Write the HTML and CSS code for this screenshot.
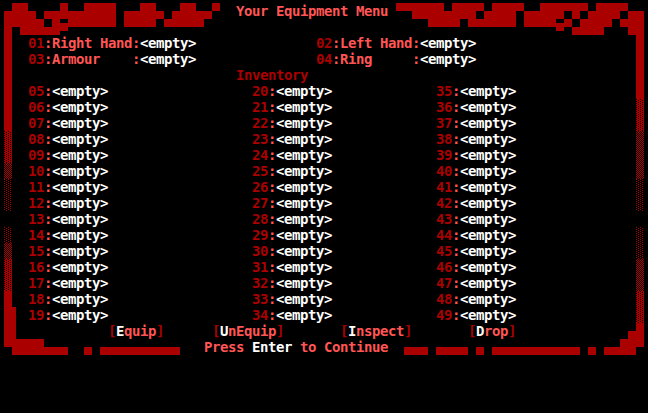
FILE: index.html
```html
<!DOCTYPE html>
<html>
<head>
<meta charset="utf-8">
<link rel="stylesheet" href="styles.css">
</head>
<body>
<div class="screen">
  <svg class="frame" width="648" height="413" viewBox="0 0 648 413" shape-rendering="crispEdges">
    <defs>
      <pattern id="light" width="4" height="2" patternUnits="userSpaceOnUse">
        <rect x="2" y="0" width="1" height="1" fill="#aa0000"/>
        <rect x="0" y="1" width="1" height="1" fill="#aa0000"/>
      </pattern>
      <pattern id="medium" width="2" height="2" patternUnits="userSpaceOnUse">
        <rect x="0" y="0" width="1" height="1" fill="#aa0000"/>
        <rect x="1" y="1" width="1" height="1" fill="#aa0000"/>
      </pattern>
      <pattern id="dark" width="4" height="2" patternUnits="userSpaceOnUse">
        <rect x="0" y="0" width="4" height="2" fill="#aa0000"/>
        <rect x="2" y="0" width="1" height="1" fill="#000"/>
        <rect x="0" y="1" width="1" height="1" fill="#000"/>
      </pattern>
    </defs>
    <g fill="#aa0000">
      <!-- top, half-row 0 -->
      <rect x="12" y="3" width="16" height="8"/>
      <rect x="60" y="3" width="8" height="8"/>
      <rect x="84" y="3" width="32" height="8"/>
      <rect x="140" y="3" width="16" height="8"/>
      <rect x="180" y="3" width="16" height="8"/>
      <rect x="212" y="3" width="8" height="8"/>
      <rect x="396" y="3" width="48" height="8"/>
      <rect x="452" y="3" width="32" height="8"/>
      <rect x="492" y="3" width="32" height="8"/>
      <rect x="540" y="3" width="48" height="8"/>
      <rect x="596" y="3" width="32" height="8"/>
      <!-- half-row 1 -->
      <rect x="4" y="11" width="32" height="8"/>
      <rect x="44" y="11" width="72" height="8"/>
      <rect x="124" y="11" width="40" height="8"/>
      <rect x="172" y="11" width="40" height="8"/>
      <rect x="412" y="11" width="64" height="8"/>
      <rect x="484" y="11" width="32" height="8"/>
      <rect x="524" y="11" width="40" height="8"/>
      <rect x="572" y="11" width="8" height="8"/>
      <rect x="588" y="11" width="32" height="8"/>
      <rect x="628" y="11" width="16" height="8"/>
      <!-- half-row 2 -->
      <rect x="4" y="19" width="40" height="8"/>
      <rect x="52" y="19" width="8" height="8"/>
      <rect x="68" y="19" width="48" height="8"/>
      <rect x="124" y="19" width="32" height="8"/>
      <rect x="164" y="19" width="40" height="8"/>
      <rect x="428" y="19" width="32" height="8"/>
      <rect x="468" y="19" width="48" height="8"/>
      <rect x="524" y="19" width="32" height="8"/>
      <rect x="564" y="19" width="8" height="8"/>
      <rect x="580" y="19" width="32" height="8"/>
      <rect x="620" y="19" width="24" height="8"/>
      <rect x="60" y="23" width="8" height="8"/>
      <rect x="556" y="23" width="8" height="8"/>
      <!-- half-row 3 -->
      <rect x="20" y="27" width="40" height="8"/>
      <rect x="572" y="27" width="32" height="8"/>
      <rect x="628" y="27" width="16" height="8"/>
      <!-- left bar -->
      <rect x="4" y="11" width="8" height="120"/>
      <rect x="4" y="131" width="8" height="32" fill="url(#dark)"/>
      <rect x="4" y="163" width="8" height="16" fill="url(#medium)"/>
      <rect x="4" y="179" width="8" height="32" fill="url(#light)"/>
      <rect x="4" y="227" width="8" height="16" fill="url(#light)"/>
      <rect x="4" y="243" width="8" height="16" fill="url(#medium)"/>
      <rect x="4" y="259" width="8" height="32" fill="url(#dark)"/>
      <rect x="4" y="291" width="8" height="56"/>
      <rect x="12" y="307" width="4" height="32"/>
      <rect x="4" y="339" width="40" height="8"/>
      <!-- right bar -->
      <rect x="636" y="11" width="8" height="88"/>
      <rect x="636" y="99" width="8" height="32" fill="url(#dark)"/>
      <rect x="636" y="131" width="8" height="48" fill="url(#medium)"/>
      <rect x="636" y="179" width="8" height="32" fill="url(#light)"/>
      <rect x="636" y="227" width="8" height="32" fill="url(#light)"/>
      <rect x="636" y="259" width="8" height="32" fill="url(#medium)"/>
      <rect x="636" y="291" width="8" height="32" fill="url(#dark)"/>
      <rect x="636" y="323" width="8" height="24"/>
      <rect x="628" y="331" width="8" height="16"/>
      <rect x="620" y="339" width="8" height="8"/>
      <!-- bottom -->
      <rect x="12" y="347" width="56" height="8"/>
      <rect x="84" y="347" width="8" height="8"/>
      <rect x="100" y="347" width="80" height="8"/>
      <rect x="404" y="347" width="24" height="8"/>
      <rect x="436" y="347" width="32" height="8"/>
      <rect x="476" y="347" width="8" height="8"/>
      <rect x="492" y="347" width="88" height="8"/>
      <rect x="588" y="347" width="8" height="8"/>
      <rect x="604" y="347" width="32" height="8"/>
    </g>
  </svg>

  <div class="row title">Your Equipment Menu</div>
  <div class="row"></div>

  <div class="equip">
    <div class="slot"><span class="num">01</span>:<span class="lbl">Right Hand</span>:<span class="val">&lt;empty&gt;</span></div>
    <div class="slot"><span class="num">02</span>:<span class="lbl">Left Hand</span>:<span class="val">&lt;empty&gt;</span></div>
    <div class="slot"><span class="num">03</span>:<span class="lbl">Armour    </span>:<span class="val">&lt;empty&gt;</span></div>
    <div class="slot"><span class="num">04</span>:<span class="lbl">Ring     </span>:<span class="val">&lt;empty&gt;</span></div>
  </div>

  <div class="row heading">Inventory</div>

  <div class="inventory">
    <div class="slot"><span class="num">05</span>:<span class="val">&lt;empty&gt;</span></div>
    <div class="slot"><span class="num">06</span>:<span class="val">&lt;empty&gt;</span></div>
    <div class="slot"><span class="num">07</span>:<span class="val">&lt;empty&gt;</span></div>
    <div class="slot"><span class="num">08</span>:<span class="val">&lt;empty&gt;</span></div>
    <div class="slot"><span class="num">09</span>:<span class="val">&lt;empty&gt;</span></div>
    <div class="slot"><span class="num">10</span>:<span class="val">&lt;empty&gt;</span></div>
    <div class="slot"><span class="num">11</span>:<span class="val">&lt;empty&gt;</span></div>
    <div class="slot"><span class="num">12</span>:<span class="val">&lt;empty&gt;</span></div>
    <div class="slot"><span class="num">13</span>:<span class="val">&lt;empty&gt;</span></div>
    <div class="slot"><span class="num">14</span>:<span class="val">&lt;empty&gt;</span></div>
    <div class="slot"><span class="num">15</span>:<span class="val">&lt;empty&gt;</span></div>
    <div class="slot"><span class="num">16</span>:<span class="val">&lt;empty&gt;</span></div>
    <div class="slot"><span class="num">17</span>:<span class="val">&lt;empty&gt;</span></div>
    <div class="slot"><span class="num">18</span>:<span class="val">&lt;empty&gt;</span></div>
    <div class="slot"><span class="num">19</span>:<span class="val">&lt;empty&gt;</span></div>
    <div class="slot"><span class="num">20</span>:<span class="val">&lt;empty&gt;</span></div>
    <div class="slot"><span class="num">21</span>:<span class="val">&lt;empty&gt;</span></div>
    <div class="slot"><span class="num">22</span>:<span class="val">&lt;empty&gt;</span></div>
    <div class="slot"><span class="num">23</span>:<span class="val">&lt;empty&gt;</span></div>
    <div class="slot"><span class="num">24</span>:<span class="val">&lt;empty&gt;</span></div>
    <div class="slot"><span class="num">25</span>:<span class="val">&lt;empty&gt;</span></div>
    <div class="slot"><span class="num">26</span>:<span class="val">&lt;empty&gt;</span></div>
    <div class="slot"><span class="num">27</span>:<span class="val">&lt;empty&gt;</span></div>
    <div class="slot"><span class="num">28</span>:<span class="val">&lt;empty&gt;</span></div>
    <div class="slot"><span class="num">29</span>:<span class="val">&lt;empty&gt;</span></div>
    <div class="slot"><span class="num">30</span>:<span class="val">&lt;empty&gt;</span></div>
    <div class="slot"><span class="num">31</span>:<span class="val">&lt;empty&gt;</span></div>
    <div class="slot"><span class="num">32</span>:<span class="val">&lt;empty&gt;</span></div>
    <div class="slot"><span class="num">33</span>:<span class="val">&lt;empty&gt;</span></div>
    <div class="slot"><span class="num">34</span>:<span class="val">&lt;empty&gt;</span></div>
    <div class="slot"><span class="num">35</span>:<span class="val">&lt;empty&gt;</span></div>
    <div class="slot"><span class="num">36</span>:<span class="val">&lt;empty&gt;</span></div>
    <div class="slot"><span class="num">37</span>:<span class="val">&lt;empty&gt;</span></div>
    <div class="slot"><span class="num">38</span>:<span class="val">&lt;empty&gt;</span></div>
    <div class="slot"><span class="num">39</span>:<span class="val">&lt;empty&gt;</span></div>
    <div class="slot"><span class="num">40</span>:<span class="val">&lt;empty&gt;</span></div>
    <div class="slot"><span class="num">41</span>:<span class="val">&lt;empty&gt;</span></div>
    <div class="slot"><span class="num">42</span>:<span class="val">&lt;empty&gt;</span></div>
    <div class="slot"><span class="num">43</span>:<span class="val">&lt;empty&gt;</span></div>
    <div class="slot"><span class="num">44</span>:<span class="val">&lt;empty&gt;</span></div>
    <div class="slot"><span class="num">45</span>:<span class="val">&lt;empty&gt;</span></div>
    <div class="slot"><span class="num">46</span>:<span class="val">&lt;empty&gt;</span></div>
    <div class="slot"><span class="num">47</span>:<span class="val">&lt;empty&gt;</span></div>
    <div class="slot"><span class="num">48</span>:<span class="val">&lt;empty&gt;</span></div>
    <div class="slot"><span class="num">49</span>:<span class="val">&lt;empty&gt;</span></div>
  </div>

  <div class="actions">
    <div class="btn"><span class="br">[</span><span class="key">E</span>quip<span class="br">]</span></div>
    <div class="btn"><span class="br">[</span><span class="key">U</span>nEquip<span class="br">]</span></div>
    <div class="btn"><span class="br">[</span><span class="key">I</span>nspect<span class="br">]</span></div>
    <div class="btn"><span class="br">[</span><span class="key">D</span>rop<span class="br">]</span></div>
  </div>

  <div class="row prompt">Press <span class="key">Enter</span> to Continue</div>
</div>
</body>
</html>
```

FILE: styles.css
```css
* {
  box-sizing: border-box;
}

html, body {
  margin: 0;
  padding: 0;
  background: #000;
}

body {
  width: 648px;
  height: 413px;
  overflow: hidden;
}

.screen {
  position: relative;
  width: 648px;
  height: 413px;
  padding: 3px 4px 0 4px;
  font-family: "DejaVu Sans Mono", "Liberation Mono", monospace;
  font-weight: bold;
  font-size: 14px;
  line-height: 16px;
  letter-spacing: -0.43px;
  color: #ff5555;
}

.frame {
  position: absolute;
  left: 0;
  top: 0;
}

.row {
  position: relative;
  height: 16px;
  white-space: pre;
}

.title {
  padding-left: 232px;
}

.heading {
  padding-left: 232px;
  color: #aa0000;
}

.equip {
  position: relative;
  display: grid;
  grid-template-columns: 288px auto;
  grid-auto-rows: 16px;
  padding-left: 24px;
}

.inventory {
  position: relative;
  display: grid;
  grid-template-columns: 224px 184px auto;
  grid-template-rows: repeat(15, 16px);
  grid-auto-flow: column;
  padding-left: 24px;
}

.slot,
.btn {
  height: 16px;
  white-space: pre;
}

.num {
  color: #aa0000;
}

.lbl {
  color: #ff5555;
}

.val {
  color: #ffffff;
}

.actions {
  position: relative;
  display: grid;
  grid-template-columns: 104px 128px 128px auto;
  height: 16px;
  padding-left: 104px;
}

.br {
  color: #aa0000;
}

.key {
  color: #ffffff;
}

.prompt {
  padding-left: 200px;
}
```
